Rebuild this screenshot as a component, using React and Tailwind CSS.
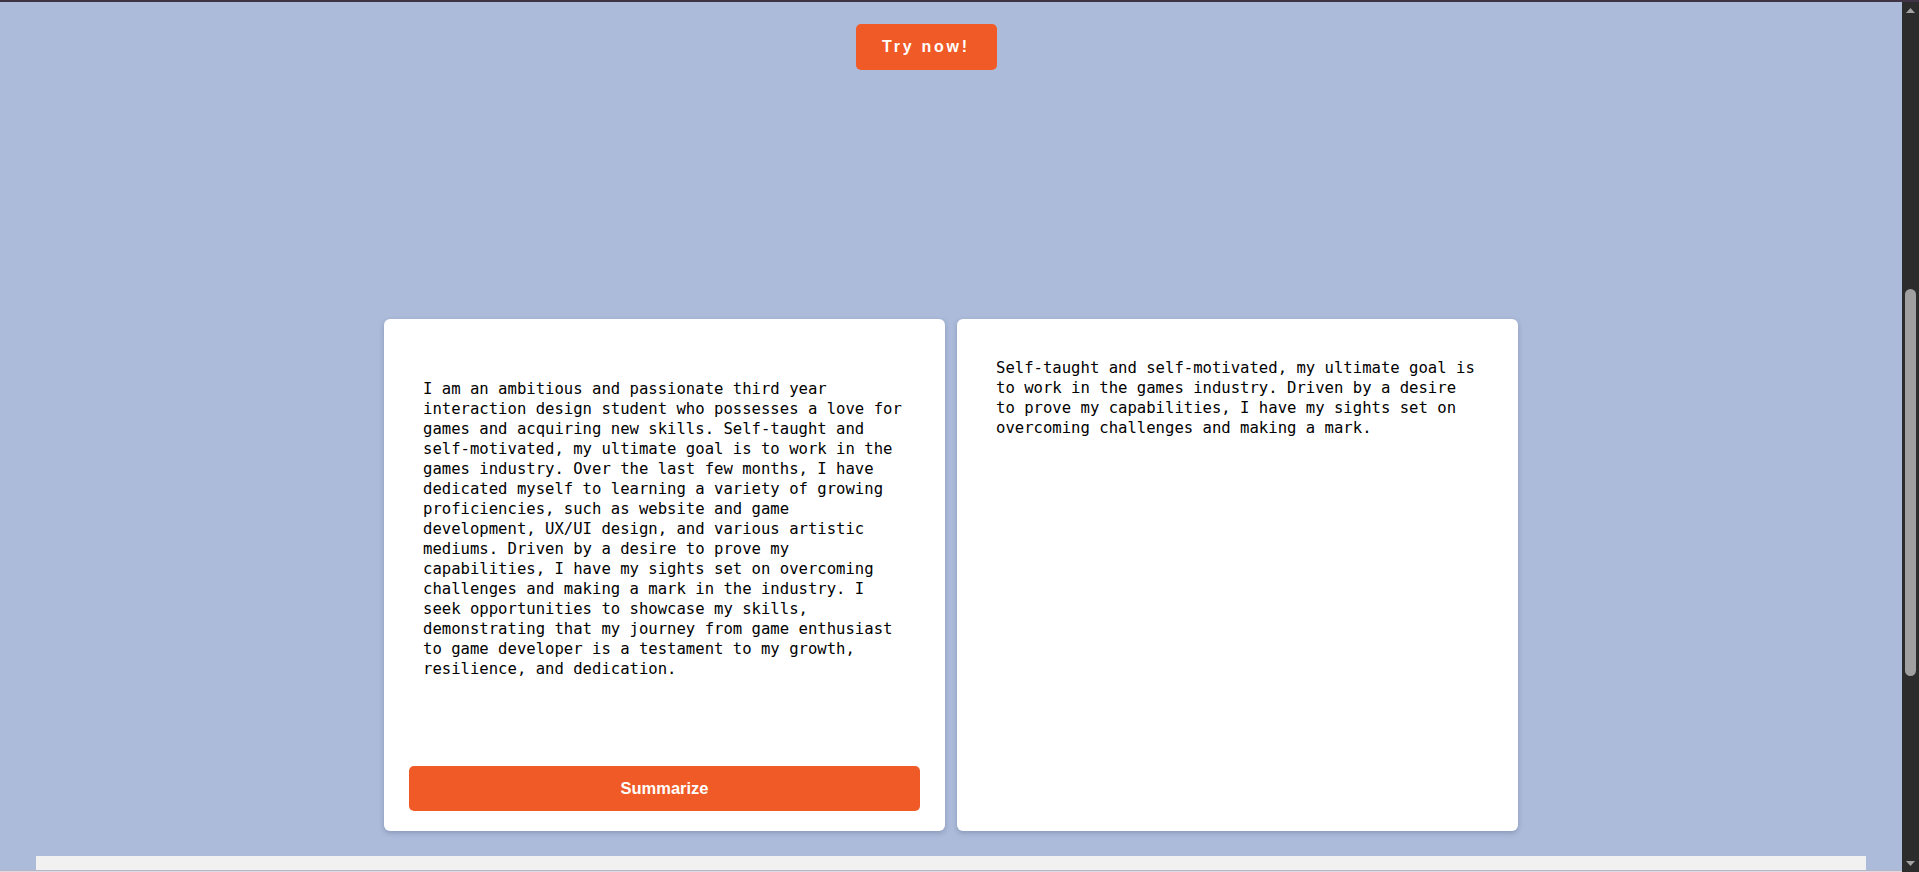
const leftLines = [
  "I am an ambitious and passionate third year",
  "interaction design student who possesses a love for",
  "games and acquiring new skills. Self-taught and",
  "self-motivated, my ultimate goal is to work in the",
  "games industry. Over the last few months, I have",
  "dedicated myself to learning a variety of growing",
  "proficiencies, such as website and game",
  "development, UX/UI design, and various artistic",
  "mediums. Driven by a desire to prove my",
  "capabilities, I have my sights set on overcoming",
  "challenges and making a mark in the industry. I",
  "seek opportunities to showcase my skills,",
  "demonstrating that my journey from game enthusiast",
  "to game developer is a testament to my growth,",
  "resilience, and dedication.",
];

const rightLines = [
  "Self-taught and self-motivated, my ultimate goal is",
  "to work in the games industry. Driven by a desire",
  "to prove my capabilities, I have my sights set on",
  "overcoming challenges and making a mark.",
];

const mono = "font-['DejaVu_Sans_Mono',monospace] text-[15.6px] leading-[20px] text-black whitespace-pre";

function TextBlock({ lines }) {
  return (
    <div className={mono}>
      {lines.map((l, i) => (
        <div key={i}>{l}</div>
      ))}
    </div>
  );
}

export default function App() {
  return (
    <div className="flex flex-col h-[872px] w-full overflow-hidden bg-[#acbbda]">
      <div className="h-[2px] w-full bg-[#3e3446] shrink-0" />
      <div className="flex flex-1 min-h-0">
        {/* page */}
        <main className="flex-1 flex flex-col min-w-0">
          <div className="w-[1852px] flex justify-center pt-[22px]">
            <button className="w-[141px] h-[46px] rounded-[5px] bg-[#f05a26] text-white font-['Liberation_Sans',Arial,sans-serif] font-bold text-[16px] tracking-[2.75px]">
              Try now!
            </button>
          </div>

          <div className="flex justify-center gap-[12px] mt-[249px]">
            <div className="w-[561px] h-[512px] bg-white rounded-[6px] shadow-[0_2px_5px_rgba(60,70,110,0.3)] flex flex-col">
              <div className="pl-[39px] pt-[60px]">
                <TextBlock lines={leftLines} />
              </div>
              <button className="mt-auto mx-[25px] mb-[20px] h-[45px] rounded-[5px] bg-[#f05a26] text-white font-['Liberation_Sans',Arial,sans-serif] font-bold text-[16.5px]">
                Summarize
              </button>
            </div>
            <div className="w-[561px] h-[512px] bg-white rounded-[6px] shadow-[0_2px_5px_rgba(60,70,110,0.3)] pl-[39px] pt-[39px]">
              <TextBlock lines={rightLines} />
            </div>
          </div>

          <div className="mt-[25px] ml-[36px] w-[1830px] h-[14px] bg-[#f1f1f1] shrink-0" />
          <div className="h-[1px] w-full bg-[#b9b6c4] shrink-0" />
          <div className="flex-1 bg-[#dcd8e6]" />
        </main>

        {/* scrollbar */}
        <div className="w-[17px] shrink-0 bg-[#2c2c2c] flex flex-col items-center">
          <svg width="11" height="8" viewBox="0 0 11 8" className="mt-[4px]">
            <path d="M1 7 L5.5 2 L10 7 Z" fill="#a3a3a3" />
          </svg>
          <div className="w-[11px] h-[387px] rounded-[6px] bg-[#a0a0a0] mt-[275px]" />
          <div className="flex-1" />
          <svg width="11" height="8" viewBox="0 0 11 8" className="mb-[4px]">
            <path d="M1 1 L10 1 L5.5 6 Z" fill="#a3a3a3" />
          </svg>
        </div>
      </div>
    </div>
  );
}
